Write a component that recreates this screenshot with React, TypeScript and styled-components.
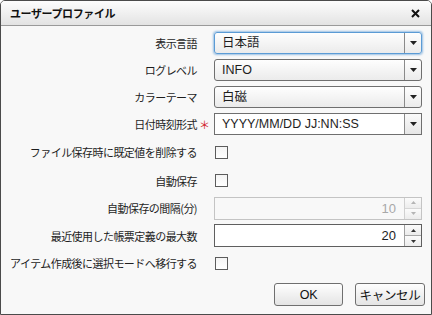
import React from "react";
import styled, { createGlobalStyle } from "styled-components";

const GlobalStyle = createGlobalStyle`
  html, body { margin: 0; padding: 0; background: #ffffff; }
  body {
    font-family: "Noto Sans CJK JP", "Noto Sans", "Liberation Sans", sans-serif;
    font-size: 11px;
    color: #1e1e1e;
  }
`;

const Dialog = styled.div`
  width: 432px;
  height: 315px;
  box-sizing: border-box;
  border: 1px solid #4b4b4b;
  border-radius: 5px 5px 0 0;
  background: #f8f8f8;
  display: flex;
  flex-direction: column;
  overflow: hidden;
`;

const TitleBar = styled.div`
  height: 24px;
  flex: none;
  display: flex;
  align-items: center;
  justify-content: space-between;
  padding: 0 11px 0 9px;
  background: linear-gradient(#fdfdfd, #e3e3e3);
  border-bottom: 1px solid #9a9a9a;
  font-weight: bold;
  font-size: 11px;
  letter-spacing: -0.4px;
  color: #111;
`;

const CloseIcon = styled.svg`
  width: 9px;
  height: 9px;
`;

const Form = styled.div`
  padding-top: 3px;
  display: flex;
  flex-direction: column;
`;

const Row = styled.div<{ $h: number }>`
  height: ${(p) => p.$h}px;
  display: grid;
  grid-template-columns: 196px 17px 208px;
  align-items: center;
`;

const Label = styled.div`
  text-align: right;
  white-space: nowrap;
  line-height: 14px;
  letter-spacing: -0.55px;
`;

const Mark = styled.span`
  color: #d2232a;
  font-size: 11px;
  text-align: center;
  padding-right: 2px;
`;

const SelectBox = styled.div<{ $focus?: boolean; $editable?: boolean }>`
  height: 22px;
  box-sizing: border-box;
  display: flex;
  border: 1px solid ${(p) => (p.$focus ? "#5b9bd5" : "#6f6f6f")};
  border-radius: ${(p) => (p.$editable ? "0" : "3px")};
  background: ${(p) =>
    p.$editable ? "#ffffff" : "linear-gradient(#fefefe, #ebebeb)"};
  box-shadow: ${(p) => (p.$focus ? "0 0 2px 1px rgba(91,155,213,0.6)" : "none")};
`;

const SelectText = styled.div`
  flex: 1;
  padding-left: 7px;
  display: flex;
  align-items: center;
  line-height: 14px;
  font-family: "Liberation Sans", "Noto Sans CJK JP", sans-serif;
  font-size: 12.5px;
`;

const DropButton = styled.div<{ $editable?: boolean }>`
  width: 16px;
  border-left: 1px solid #8a8a8a;
  display: flex;
  align-items: center;
  justify-content: center;
  background: ${(p) =>
    p.$editable ? "linear-gradient(#fafafa, #e6e6e6)" : "transparent"};
`;

const Arrow = styled.svg`
  width: 7px;
  height: 4px;
`;

const Checkbox = styled.div`
  width: 13px;
  height: 13px;
  box-sizing: border-box;
  border: 1px solid #5c5c5c;
  background: linear-gradient(#f4f4f4, #ffffff);
  margin-left: 1px;
`;

const Spinner = styled.div<{ $disabled?: boolean }>`
  height: 23px;
  box-sizing: border-box;
  display: flex;
  border: 1px solid ${(p) => (p.$disabled ? "#c4c4c4" : "#5f5f5f")};
  background: ${(p) => (p.$disabled ? "#f8f8f8" : "#ffffff")};
  color: ${(p) => (p.$disabled ? "#a8a8a8" : "#1e1e1e")};
`;

const SpinValue = styled.div`
  flex: 1;
  text-align: right;
  padding-right: 8px;
  display: flex;
  align-items: center;
  justify-content: flex-end;
  font-family: "Liberation Sans", sans-serif;
  font-size: 13px;
`;

const SpinButtons = styled.div<{ $disabled?: boolean }>`
  width: 16px;
  display: flex;
  flex-direction: column;
  border-left: 1px solid ${(p) => (p.$disabled ? "#d0d0d0" : "#a0a0a0")};
`;

const SpinHalf = styled.div<{ $disabled?: boolean; $top?: boolean }>`
  flex: 1;
  display: flex;
  align-items: center;
  justify-content: center;
  background: linear-gradient(#fbfbfb, #ececec);
  border-bottom: ${(p) =>
    p.$top ? `1px solid ${p.$disabled ? "#d6d6d6" : "#a8a8a8"}` : "none"};
`;

const SmallArrow = styled.svg`
  width: 5px;
  height: 3px;
`;

const Footer = styled.div`
  display: flex;
  justify-content: flex-end;
  gap: 12px;
  padding: 6px 6px 0 0;
`;

const Button = styled.button<{ $w: number }>`
  width: ${(p) => p.$w}px;
  height: 23px;
  border: 1px solid #6f6f6f;
  border-radius: 3px;
  background: linear-gradient(#fefefe, #e4e4e4);
  font-family: "Liberation Sans", "Noto Sans CJK JP", sans-serif;
  font-size: 12.5px;
  color: #111;
  padding: 0;
  letter-spacing: -0.3px;
`;

const DownArrow = ({ color = "#222" }: { color?: string }) => (
  <Arrow viewBox="0 0 7 4">
    <path d="M0 0 H7 L3.5 4 Z" fill={color} />
  </Arrow>
);

const Select = ({
  value,
  focus,
  editable,
}: {
  value: string;
  focus?: boolean;
  editable?: boolean;
}) => (
  <SelectBox $focus={focus} $editable={editable}>
    <SelectText>{value}</SelectText>
    <DropButton $editable={editable}>
      <DownArrow />
    </DropButton>
  </SelectBox>
);

const NumberSpinner = ({ value, disabled }: { value: number; disabled?: boolean }) => {
  const c = disabled ? "#b5b5b5" : "#333";
  return (
    <Spinner $disabled={disabled}>
      <SpinValue>{value}</SpinValue>
      <SpinButtons $disabled={disabled}>
        <SpinHalf $disabled={disabled} $top>
          <SmallArrow viewBox="0 0 5 3">
            <path d="M0 3 H5 L2.5 0 Z" fill={c} />
          </SmallArrow>
        </SpinHalf>
        <SpinHalf $disabled={disabled}>
          <SmallArrow viewBox="0 0 5 3">
            <path d="M0 0 H5 L2.5 3 Z" fill={c} />
          </SmallArrow>
        </SpinHalf>
      </SpinButtons>
    </Spinner>
  );
};

export default function App() {
  return (
    <>
      <GlobalStyle />
      <Dialog>
        <TitleBar>
          <span>ユーザープロファイル</span>
          <CloseIcon viewBox="0 0 9 9">
            <path d="M1 1 L8 8 M8 1 L1 8" stroke="#111" strokeWidth="2" />
          </CloseIcon>
        </TitleBar>
        <Form>
          <Row $h={27}>
            <Label>表示言語</Label>
            <span />
            <Select value="日本語" focus />
          </Row>
          <Row $h={27}>
            <Label>ログレベル</Label>
            <span />
            <Select value="INFO" />
          </Row>
          <Row $h={27}>
            <Label>カラーテーマ</Label>
            <span />
            <Select value="白磁" />
          </Row>
          <Row $h={27}>
            <Label>日付時刻形式</Label>
            <Mark>＊</Mark>
            <Select value="YYYY/MM/DD JJ:NN:SS" editable />
          </Row>
          <Row $h={30}>
            <Label>ファイル保存時に既定値を削除する</Label>
            <span />
            <Checkbox />
          </Row>
          <Row $h={27}>
            <Label>自動保存</Label>
            <span />
            <Checkbox />
          </Row>
          <Row $h={28}>
            <Label>自動保存の間隔(分)</Label>
            <span />
            <NumberSpinner value={10} disabled />
          </Row>
          <Row $h={27}>
            <Label>最近使用した帳票定義の最大数</Label>
            <span />
            <NumberSpinner value={20} />
          </Row>
          <Row $h={28}>
            <Label>アイテム作成後に選択モードへ移行する</Label>
            <span />
            <Checkbox />
          </Row>
        </Form>
        <Footer>
          <Button $w={69}>OK</Button>
          <Button $w={70}>キャンセル</Button>
        </Footer>
      </Dialog>
    </>
  );
}
